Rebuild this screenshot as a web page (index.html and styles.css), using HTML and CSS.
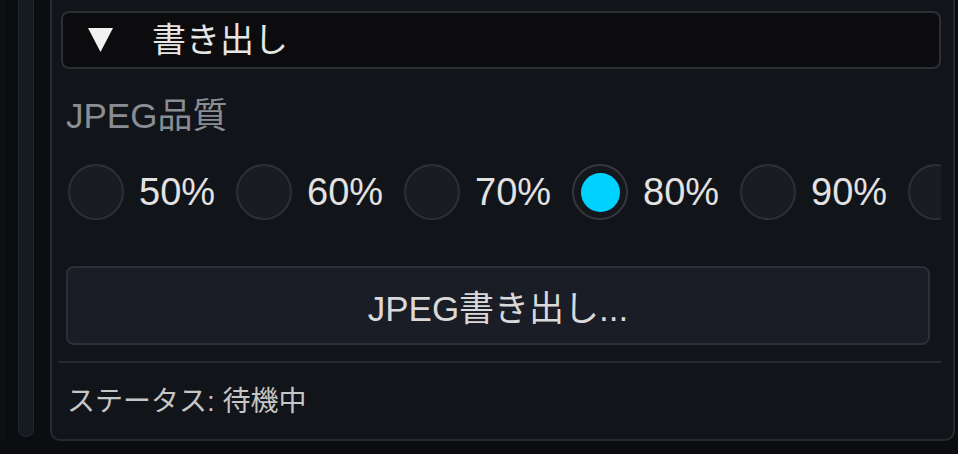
FILE: index.html
```html
<!DOCTYPE html>
<html lang="ja">
<head>
<meta charset="utf-8">
<link rel="stylesheet" href="styles.css">
</head>
<body>
<div class="app">
  <div class="edge"></div>
  <div class="rail"></div>
  <div class="gutter"></div>
  <section class="panel">
    <div class="section-head">
      <svg class="caret" width="25" height="24" viewBox="0 0 25 24"><polygon points="0,0 25,0 12.5,24" fill="#f2f2f2"/></svg>
      <span class="section-title">書き出し</span>
    </div>
    <div class="field-label">JPEG品質</div>
    <div class="radio-row">
      <label class="radio"><span class="dot"></span><span class="radio-text">50%</span></label>
      <label class="radio"><span class="dot"></span><span class="radio-text">60%</span></label>
      <label class="radio"><span class="dot"></span><span class="radio-text">70%</span></label>
      <label class="radio"><span class="dot checked"></span><span class="radio-text">80%</span></label>
      <label class="radio"><span class="dot"></span><span class="radio-text">90%</span></label>
      <label class="radio"><span class="dot"></span><span class="radio-text">100%</span></label>
    </div>
    <button class="export-btn">JPEG書き出し...</button>
    <div class="separator"></div>
    <div class="status">ステータス: 待機中</div>
  </section>
</div>
</body>
</html>
```
FILE: styles.css
```css
html, body {
  margin: 0;
  padding: 0;
}
body {
  width: 958px;
  height: 454px;
  overflow: hidden;
  background: #0b0d11;
  font-family: "Liberation Sans", "Noto Sans CJK JP", sans-serif;
}
.app {
  display: flex;
  align-items: flex-start;
  height: 454px;
}
.edge {
  width: 5px;
  height: 440px;
  background: #0e1015;
  margin-right: 13px;
  flex-shrink: 0;
}
.rail {
  width: 14px;
  height: 436px;
  background: #161a21;
  border: 1px solid #22262d;
  border-top: none;
  border-radius: 0 0 8px 8px;
  flex-shrink: 0;
}
.gutter {
  width: 16px;
  flex-shrink: 0;
}
.panel {
  width: 905px;
  height: 441px;
  flex-shrink: 0;
  background: #111419;
  border: 2px solid #262a31;
  border-top: none;
  border-radius: 0 0 10px 10px;
  padding: 11px 12px 0 9px;
  box-sizing: border-box;
  display: flex;
  flex-direction: column;
  overflow: hidden;
}
.section-head {
  height: 58px;
  box-sizing: border-box;
  background: #0c0c0e;
  border: 2px solid #2c3036;
  border-radius: 8px;
  display: flex;
  align-items: center;
  padding-left: 25px;
  flex-shrink: 0;
}
.caret {
  display: block;
}
.section-title {
  margin-left: 39px;
  font-size: 34px;
  color: #e6e6e6;
  line-height: 40px;
}
.field-label {
  margin-top: 27px;
  margin-left: 5px;
  font-size: 35px;
  line-height: 40px;
  color: #8a8d93;
}
.radio-row {
  margin-top: 27px;
  margin-left: 7px;
  height: 58px;
  display: flex;
  align-items: center;
  gap: 20px;
  overflow: hidden;
  flex-shrink: 0;
}
.radio {
  display: flex;
  align-items: center;
  gap: 15px;
  flex-shrink: 0;
}
.dot {
  width: 56px;
  height: 56px;
  box-sizing: border-box;
  border-radius: 50%;
  background: #191c23;
  border: 2px solid #2c3037;
  display: flex;
  align-items: center;
  justify-content: center;
}
.dot.checked {
  background: #14171c;
  border-color: #34373e;
}
.dot.checked::after {
  content: "";
  width: 39px;
  height: 39px;
  border-radius: 50%;
  background: #00d2ff;
}
.radio-text {
  width: 77px;
  font-size: 38px;
  line-height: 40px;
  color: #e2e2e2;
  white-space: nowrap;
}
.export-btn {
  margin: 45px 11px 0 5px;
  height: 79px;
  flex-shrink: 0;
  background: #1a1d25;
  border: 2px solid #2b2f37;
  border-radius: 8px;
  color: #d9d9d9;
  font-family: inherit;
  font-size: 35px;
  padding: 0;
}
.separator {
  margin: 16px 0 0 -3px;
  height: 2px;
  background: #262a31;
  flex-shrink: 0;
}
.status {
  margin-top: 22px;
  margin-left: 6px;
  font-size: 28px;
  line-height: 34px;
  color: #c6c6c6;
}
```
